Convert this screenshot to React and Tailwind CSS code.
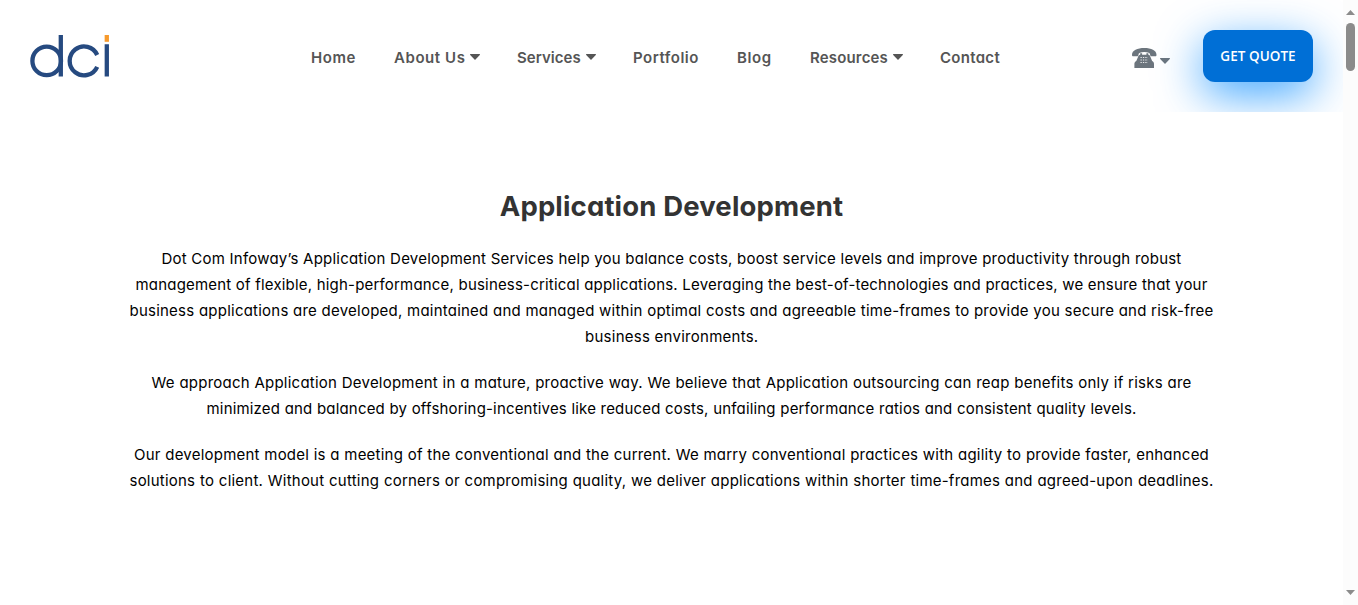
const navItems = [
  { label: 'Home', width: 'w-[45px] ml-[311px]', tracking: 'tracking-[0.6px]' },
  { label: 'About Us', width: 'w-[86px] ml-[38px]', tracking: 'tracking-[0.57px]', menu: true },
  { label: 'Services', width: 'w-[79px] ml-[37px]', tracking: 'tracking-[0.05px]', menu: true },
  { label: 'Portfolio', width: 'w-[67px] ml-[37px]', tracking: 'tracking-[0.5px]' },
  { label: 'Blog', width: 'w-[35px] ml-[37px]', tracking: 'tracking-[0.6px]' },
  { label: 'Resources', width: 'w-[93px] ml-[38px]', tracking: 'tracking-[0.17px]', menu: true },
  { label: 'Contact', width: 'w-[61px] ml-[37px]', tracking: 'tracking-[0.3px]' },
];

const paragraphs = [
  [
    ['Dot Com Infoway’s Application Development Services help you balance costs, boost service levels and improve productivity through robust', 'w-[1020px] tracking-[0.225px]'],
    ['management of flexible, high-performance, business-critical applications. Leveraging the best-of-technologies and practices, we ensure that your', 'w-[1072px] tracking-[0.19px]'],
    ['business applications are developed, maintained and managed within optimal costs and agreeable time-frames to provide you secure and risk-free', 'w-[1084px] tracking-[0.23px]'],
    ['business environments.', 'w-[173px] tracking-[0.26px]'],
  ],
  [
    ['We approach Application Development in a mature, proactive way. We believe that Application outsourcing can reap benefits only if risks are', 'w-[1040px] tracking-[0.23px]'],
    ['minimized and balanced by offshoring-incentives like reduced costs, unfailing performance ratios and consistent quality levels.', 'w-[930px] tracking-[0.18px]'],
  ],
  [
    ['Our development model is a meeting of the conventional and the current. We marry conventional practices with agility to provide faster, enhanced', 'w-[1075px] tracking-[0.22px]'],
    ['solutions to client. Without cutting corners or compromising quality, we deliver applications within shorter time-frames and agreed-upon deadlines.', 'w-[1084px] tracking-[0.22px]'],
  ],
];

function Caret({ className }) {
  return (
    <svg viewBox="0 0 10 6" className={`h-[6px] w-[10px] shrink-0 ${className}`} fill="currentColor">
      <path d="M.6 0h8.8c.6 0 .8.6.4 1L5.5 5.4a.7.7 0 0 1-1 0L.2 1C-.2.6 0 0 .6 0Z" />
    </svg>
  );
}

function Logo() {
  return (
    <svg viewBox="0 0 80 43" className="h-[43px] w-[80px]" fill="none" stroke="#264a80" strokeWidth="4.3">
      <circle cx="16.7" cy="25.9" r="14.3" />
      <path d="M30.8 0v41.4M76.8 9.3v32.1" />
      <path d="M67.2 20A14.4 14.4 0 1 0 67.2 31.8" />
      <path d="M76.8 0v6.8" stroke="#f79a2c" />
    </svg>
  );
}

function Phone() {
  return (
    <svg viewBox="0 0 25 20" className="h-[20px] w-[25px]" fill="#6c757d">
      <path d="M0 6.7C0 2.4 5.4 0 12.3 0s12.2 2.4 12.2 6.7c0 1.3-.3 1.6-1.3 1.6h-3.5c-1 0-1.5-.5-1.5-1.4 0-2-2.2-2.9-5.9-2.9s-5.9.9-5.9 2.9c0 .9-.5 1.4-1.5 1.4H1.4C.4 8.3 0 8 0 6.7Z" />
      <path d="M8.2 5.3h1.9v1.4h4.3V5.3h1.9v1.4c1.3.4 1.8 1.1 2.3 2.5l1.5 3.9c1.4.8 1.9 1.6 1.9 3V20H2.4v-3.9c0-1.4.6-2.2 1.9-3l1.6-3.9c.5-1.4 1.1-2.1 2.3-2.5Z" />
      <g stroke="#fff" strokeWidth="1.1" strokeDasharray="1.3 1.1" opacity=".85">
        <path d="M8.5 9.5h7.4M8.5 12h7.4M8.5 14.5h7.4" />
      </g>
    </svg>
  );
}

export default function App() {
  return (
    <div className="flex h-[605px] w-[1358px] overflow-hidden bg-white font-['Inter',sans-serif] [font-feature-settings:'cv11']">
      <div className="w-[1343px]">
        <header className="flex h-[112px] overflow-hidden">
          <div className="mt-[35px] ml-[30px] w-[80px] shrink-0"><Logo /></div>
          <nav className="-ml-[110px] flex h-[24px] mt-[46px] text-[15px] leading-[24px] font-semibold whitespace-nowrap text-[#555]">
            {navItems.map((item) => (
              <a key={item.label} className={`flex shrink-0 justify-between ${item.width}`}>
                <span className={item.tracking}>{item.label}</span>
                {item.menu && <Caret className="mt-[8px]" />}
              </a>
            ))}
          </nav>
          <div className="mt-[48px] ml-[131px] flex shrink-0 text-[#6c757d]">
            <Phone />
            <Caret className="mt-[10px] ml-[3px]" />
          </div>
          <button className="mt-[30px] ml-[33px] h-[52px] w-[110px] shrink-0 rounded-[12px] bg-[#006fd6] pt-px font-['Open_Sans',sans-serif] text-[13.5px] font-semibold tracking-[0.05px] whitespace-nowrap text-white shadow-[0_13px_46px_rgba(0,136,255,0.75)]">
            GET QUOTE
          </button>
        </header>
        <main className="flex flex-col items-center pt-[74px] text-black">
          <h1 className="text-[27.5px] leading-[40px] font-bold tracking-[0.15px] text-[#333]">Application Development</h1>
          <div className="mt-[20px] flex flex-col gap-[20px] text-[15px] leading-[26px]">
            {paragraphs.map((lines, i) => (
              <p key={i} className="flex flex-col items-center">
                {lines.map(([text, fit]) => (
                  <span key={text} className={`block whitespace-nowrap [text-align-last:justify] ${fit}`}>{text}</span>
                ))}
              </p>
            ))}
          </div>
        </main>
      </div>
      <div className="flex w-[15px] flex-col items-center bg-[#fcfcfc] text-[#8b8b8b]">
        <svg viewBox="0 0 9 5" className="mt-[10px] h-[5px] w-[9px]" fill="currentColor"><path d="M4.5 0 9 5H0Z" /></svg>
        <div className="mt-[8px] h-[48px] w-[9px] rounded-full bg-[#8b8b8b]" />
        <svg viewBox="0 0 9 5" className="mt-auto mb-[10px] h-[5px] w-[9px]" fill="currentColor"><path d="M0 0h9L4.5 5Z" /></svg>
      </div>
    </div>
  );
}
